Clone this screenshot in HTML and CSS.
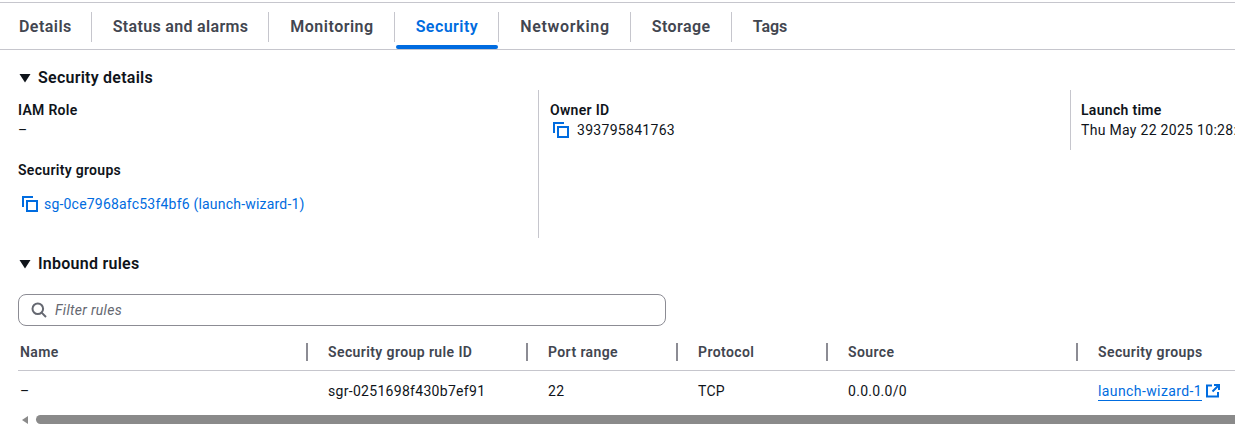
FILE: index.html
```html
<!DOCTYPE html>
<html lang="en">
<head>
<meta charset="utf-8">
<title>Security</title>
<link rel="stylesheet" href="styles.css">
</head>
<body>
<nav class="tabs">
  <a class="tab tab-first">Details</a>
  <a class="tab tab-status">Status and alarms</a>
  <a class="tab tab-monitoring">Monitoring</a>
  <a class="tab tab-active">Security</a>
  <a class="tab tab-networking">Networking</a>
  <a class="tab">Storage</a>
  <a class="tab tab-last">Tags</a>
</nav>
<section class="details">
  <h2 class="heading"><svg class="caret" viewBox="0 0 12 10"><path d="M0.5 1h11L6 9.5z"/></svg>Security details</h2>
  <div class="columns">
    <div class="col col-first">
      <div class="field">
        <div class="label">IAM Role</div>
        <div class="value">–</div>
      </div>
      <div class="field field-groups">
        <div class="label">Security groups</div>
        <div class="value value-link"><svg class="copy" viewBox="0 0 16 16"><path d="M1 11V1h10M5 5h10v10H5z"/></svg><a class="link">sg-0ce7968afc53f4bf6 (launch-wizard-1)</a></div>
      </div>
    </div>
    <div class="col col-mid">
      <div class="field">
        <div class="label">Owner ID</div>
        <div class="value value-copy"><svg class="copy" viewBox="0 0 16 16"><path d="M1 11V1h10M5 5h10v10H5z"/></svg>393795841763</div>
      </div>
    </div>
    <div class="col col-last">
      <div class="field">
        <div class="label">Launch time</div>
        <div class="value">Thu May 22 2025 10:28:</div>
      </div>
    </div>
  </div>
</section>
<section class="rules">
  <h2 class="heading"><svg class="caret" viewBox="0 0 12 10"><path d="M0.5 1h11L6 9.5z"/></svg>Inbound rules</h2>
  <div class="filter"><svg class="search" viewBox="0 0 16 16"><circle cx="6.8" cy="6.8" r="5.3"/><path d="M10.6 10.6 15 15"/></svg><span class="placeholder">Filter rules</span></div>
  <div class="table">
    <div class="row row-head">
      <div class="cell c1">Name</div>
      <div class="cell c2">Security group rule ID</div>
      <div class="cell c3">Port range</div>
      <div class="cell c4">Protocol</div>
      <div class="cell c5">Source</div>
      <div class="cell c6">Security groups</div>
    </div>
    <div class="row row-body">
      <div class="cell c1">–</div>
      <div class="cell c2">sgr-0251698f430b7ef91</div>
      <div class="cell c3">22</div>
      <div class="cell c4">TCP</div>
      <div class="cell c5">0.0.0.0/0</div>
      <div class="cell c6"><a class="link link-under">launch-wizard-1</a><svg class="external" viewBox="0 0 14 14"><path d="M6 1.5H1v11h11V8"/><path d="M8 1h5v5M13 1 6.5 7.5"/></svg></div>
    </div>
  </div>
  <div class="scrollbar"><span class="arrow"></span><span class="thumb"></span></div>
</section>
</body>
</html>
```
FILE: styles.css
```css
* { box-sizing: border-box; }
html, body { margin: 0; height: 424px; overflow: hidden; }
body {
  background: #fff;
  color: #0f141a;
  font-family: Roboto, "Liberation Sans", sans-serif;
  font-size: 14px;
  line-height: 20px;
  letter-spacing: 0.3px;
  width: 1235px;
}
.tabs {
  display: flex;
  box-sizing: content-box;
  height: 37px;
  margin-top: 2px;
  padding-top: 9px;
  border-top: 1px solid #c6c6cd;
  border-bottom: 1px solid #c6c6cd;
}
.tab {
  position: relative;
  height: 30px;
  padding: 5px 20px 0 21px;
  font-size: 16px;
  font-weight: 600;
  letter-spacing: 0.45px;
  color: #424650;
  border-right: 1px solid #c6c6cd;
  white-space: nowrap;
}
.tab-first { padding-left: 19px; padding-right: 19px; }
.tab-status { letter-spacing: 0.33px; }
.tab-monitoring { letter-spacing: 0.5px; }
.tab-networking { letter-spacing: 0.7px; }
.tab-last { border-right: 0; letter-spacing: 0; }
.tab-active { color: #006ce0; }
.tab-active::after {
  content: "";
  position: absolute;
  left: 1px;
  right: 0;
  top: 33px;
  height: 4px;
  border-radius: 2px;
  background: #006ce0;
}
.details { padding: 18px 0 0 18px; }
.heading {
  display: flex;
  align-items: center;
  margin: 0;
  font-size: 16px;
  line-height: 20px;
  font-weight: 600;
  letter-spacing: 0.25px;
}
.caret { width: 12px; height: 10px; margin: 0 7px 0 1px; fill: #0f141a; }
.columns {
  display: grid;
  grid-template-columns: 520px 532px 165px;
  margin-top: 2px;
  align-items: start;
}
.col { padding: 10px 0 0 11px; border-left: 1px solid #c6c6cd; height: 148px; }
.col-first { padding-left: 0; border-left: 0; }
.col-last { height: 60px; padding-left: 10px; }
.label { font-weight: 600; letter-spacing: 0.3px; }
.value { white-space: nowrap; }
.field-groups { margin-top: 20px; }
.value-link { display: flex; align-items: center; margin-top: 14px; padding-left: 4px; }
.value-copy { display: flex; align-items: center; }
.copy {
  width: 16px; height: 16px; margin: 0 8px 0 3px;
  fill: none; stroke: #006ce0; stroke-width: 2;
}
.value-link .copy { margin: 0 6px 0 0; }
.link { color: #006ce0; letter-spacing: 0.2px; }
.rules { padding: 16px 0 0 18px; }
.filter {
  display: flex;
  align-items: center;
  width: 648px;
  height: 32px;
  margin-top: 20px;
  padding-left: 12px;
  border: 1px solid #8c8c94;
  border-radius: 8px;
}
.search { width: 16px; height: 16px; fill: none; stroke: #656871; stroke-width: 2; }
.placeholder { margin-left: 8px; font-style: italic; color: #656871; }
.table { margin-top: 10px; }
.row { display: grid; grid-template-columns: 288px 220px 150px 150px 250px 1fr; }
.row-head {
  height: 35px;
  padding-top: 7px;
  border-bottom: 1px solid #c6c6cd;
  font-weight: 600;
  letter-spacing: 0.4px;
  color: #424650;
}
.row-body { height: 44px; padding-top: 11px; }
.row .cell { padding-left: 20px; white-space: nowrap; height: 18px; line-height: 18px; }
.row .c1 { padding-left: 2px; }
.row-head .cell:not(.c1) { border-left: 2px solid #8c8c94; }
.row-body .cell { border-left: 2px solid transparent; }
.row-body .c1 { border-left: 0; }
.row-body .c6 { display: flex; align-items: flex-start; }
.link-under { border-bottom: 1px solid #006ce0; height: 19px; line-height: 18px; letter-spacing: 0.4px; }
.external {
  width: 14px; height: 14px; margin: 2px 0 0 4px;
  fill: none; stroke: #006ce0; stroke-width: 2;
}
.scrollbar { display: flex; align-items: center; gap: 8px; height: 9px; padding-left: 4px; }
.arrow { width: 0; height: 0; border: 4px solid transparent; border-left: 0; border-right: 6px solid #8a8a8a; }
.thumb { flex: 1; height: 9px; border-radius: 5px 0 0 5px; background: #8a8a8a; }
```
